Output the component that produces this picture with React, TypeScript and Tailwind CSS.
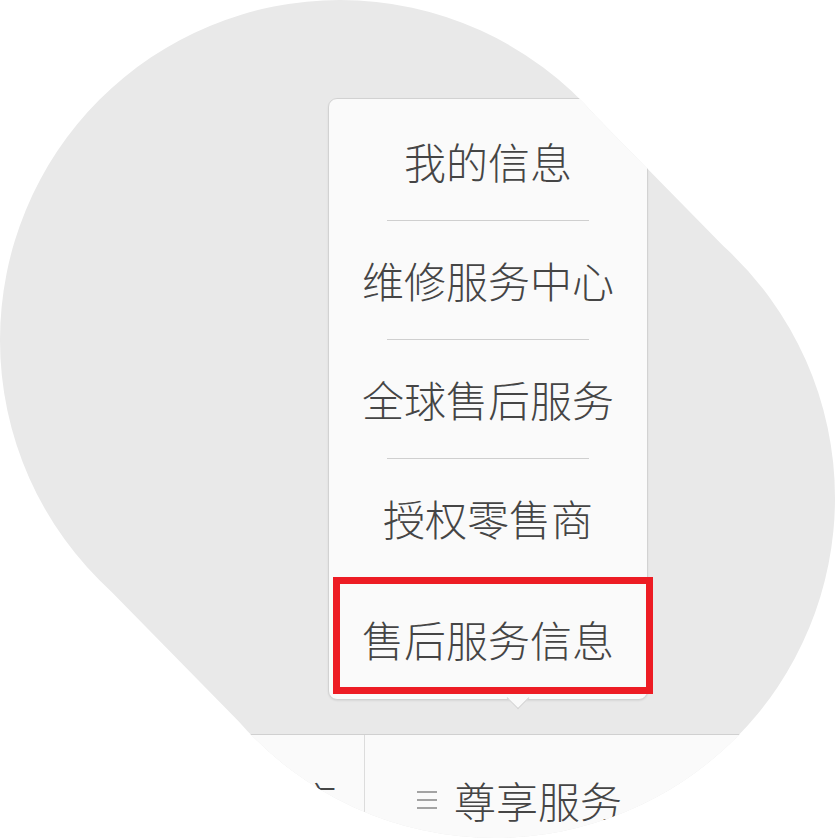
import React from "react";

const items = ["我的信息", "维修服务中心", "全球售后服务", "授权零售商"];

export default function App() {
  return (
    <div className="relative w-[835px] h-[838px] bg-white overflow-hidden font-['Noto_Sans_CJK_SC','Noto_Sans',sans-serif]">
      <svg width="0" height="0" className="absolute">
        <defs>
          <clipPath id="blob">
            <circle cx="340" cy="340" r="340" />
            <circle cx="495" cy="498" r="340" />
            <polygon points="580,100 735,258 255,738 100,580" />
          </clipPath>
        </defs>
      </svg>

      <div className="w-[835px] h-[838px] bg-[#e9e9e9] flex flex-col pt-[98px] [clip-path:url(#blob)]">
        {/* popup */}
        <div className="relative ml-[328px] w-[320px] rounded-[9px] border border-[#d2d2d2] bg-[#fafafa] shadow-[0_1px_2px_rgba(0,0,0,0.08)] flex flex-col pt-[3px] text-[42px] font-light leading-none text-[#454545]">
          {items.map((t) => (
            <React.Fragment key={t}>
              <div className="h-[118px] flex items-center justify-center">{t}</div>
              <div className="h-px w-[202px] ml-[58px] bg-[#cfcfcf]" />
            </React.Fragment>
          ))}
          <div className="h-[121px] flex items-center justify-center">售后服务信息</div>

          {/* arrow */}
          <div className="absolute left-[181px] top-[591px] w-[16px] h-[16px] rotate-45 bg-[#fafafa] border-r border-b border-[#d2d2d2]" />

          {/* red highlight */}
          <div className="absolute left-[4px] top-[478px] w-[320px] h-[117px] border-[7px] border-[#ed1c24]" />
        </div>

        {/* bottom bar */}
        <div className="mt-[34px] flex-1 flex border-t border-[#d0d0d0] bg-[#fafafa] text-[42px] font-light leading-none text-[#454545]">
          <div className="w-[365px] border-r border-[#dcdcdc] flex justify-end pr-[27px] pt-[44px]">
            <span>门店</span>
          </div>
          <div className="flex items-start pl-[52px] pt-[44px]">
            <svg width="20" height="42" viewBox="0 0 20 42" className="mr-[17px]">
              <rect x="0" y="12" width="20" height="2" fill="#a3a3a3" />
              <rect x="0" y="20" width="20" height="2" fill="#a3a3a3" />
              <rect x="0" y="28" width="20" height="2" fill="#a3a3a3" />
            </svg>
            <span>尊享服务</span>
          </div>
        </div>
      </div>
    </div>
  );
}
